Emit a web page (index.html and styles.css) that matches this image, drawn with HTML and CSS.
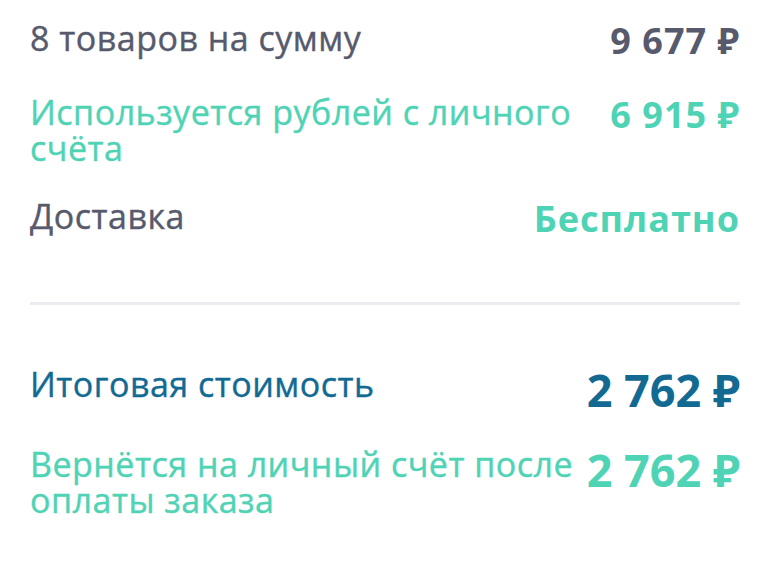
FILE: index.html
```html
<!DOCTYPE html>
<html lang="ru">
<head>
    <meta charset="UTF-8">
    <meta name="viewport" content="width=device-width, initial-scale=1.0">
    <title>Итог заказа</title>
    <link rel="stylesheet" href="styles.css">
</head>
<body>
    <div id="idSummary">
        <div class="row">
            <span class="label">8 товаров на сумму</span>
            <span class="value">9 677 ₽</span>
        </div>
        <div class="row bonus">
            <span class="label">Используется рублей с личного счёта</span>
            <span class="value">6 915 ₽</span>
        </div>
        <div class="row">
            <span class="label">Доставка</span>
            <span class="value free">Бесплатно</span>
        </div>

        <hr class="divider">

        <div class="row total">
            <span class="label">Итоговая стоимость</span>
            <span class="value">2 762 ₽</span>
        </div>
        <div class="row total bonus">
            <span class="label">Вернётся на личный счёт после оплаты заказа</span>
            <span class="value">2 762 ₽</span>
        </div>
    </div>
</body>
</html>
```

FILE: styles.css
```css
*{
    box-sizing: border-box;
}
body{
    margin: 0;
    background-color: #ffffff;
    font-family: "Open Sans", "Noto Sans", sans-serif;
    color: #575a6c;
}
#idSummary{
    display: flex;
    flex-direction: column;
    gap: 32px;
    padding: 20px 30px;
}
.row{
    display: flex;
    justify-content: space-between;
    align-items: flex-start;
    gap: 12px;
}
.label{
    font-size: 34px;
    line-height: 36px;
    letter-spacing: 0.5px;
    -webkit-text-stroke: 0.4px currentColor;
}
.value{
    font-size: 36px;
    line-height: 42px;
    font-weight: 700;
    letter-spacing: 1px;
    white-space: nowrap;
}
.bonus, .free{
    color: #4fd3b5;
}
.total{
    color: #126a93;
}
.total .value{
    font-size: 45px;
    line-height: 48px;
    letter-spacing: 0;
}
.total.bonus{
    color: #4fd3b5;
}
.divider{
    margin: 30px 0 29px 0;
    border: none;
    height: 3px;
    background-color: #ebebf0;
}
```
